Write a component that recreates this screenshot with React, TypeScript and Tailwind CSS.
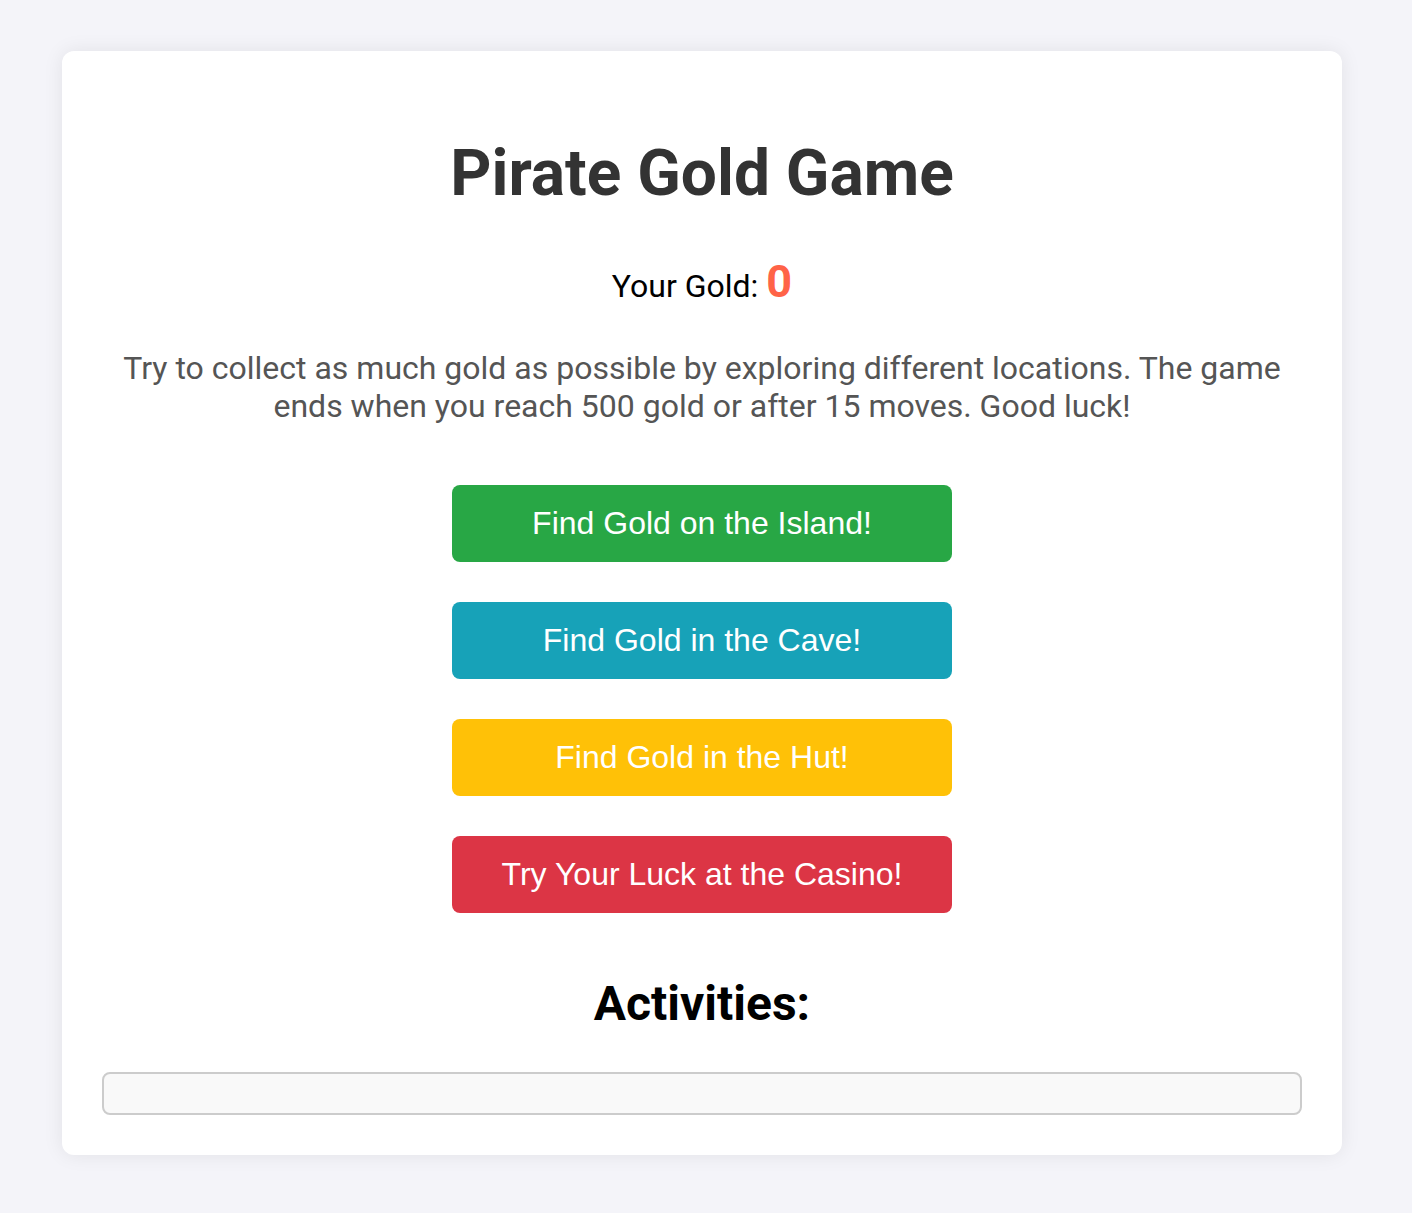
import { useState } from "react";

const actions = [
  { label: "Find Gold on the Island!", color: "bg-[#28a745]" },
  { label: "Find Gold in the Cave!", color: "bg-[#17a2b8]" },
  { label: "Find Gold in the Hut!", color: "bg-[#ffc107]" },
  { label: "Try Your Luck at the Casino!", color: "bg-[#dc3545]" },
];

export default function App() {
  const [gold] = useState(0);

  return (
    <div className="min-h-[1213px] w-full bg-[#f4f4f9] pt-[51px] font-['Roboto',sans-serif] leading-[normal]">
      <div className="ml-[62px] flex w-[1280px] flex-col items-center rounded-xl bg-white p-10 shadow-[0_0_20px_rgba(0,0,0,0.08)]">
        <h1 className="mt-[45px] text-[64px] font-bold leading-[normal] text-[#333]">Pirate Gold Game</h1>

        <p className="mt-[44px] text-[32px] leading-[normal] text-black">
          Your Gold: <span className="text-[45px] font-bold text-[#ff6347]">{gold}</span>
        </p>

        <p className="mt-[41px] text-center text-[32px] leading-[normal] text-[#555]">
          Try to collect as much gold as possible by exploring different locations. The game ends when you reach
          500 gold or after 15 moves. Good luck!
        </p>

        {/* location buttons */}
        <div className="mt-[60px] flex flex-col gap-10">
          {actions.map((a) => (
            <button
              key={a.label}
              className={`flex h-[77px] w-[500px] items-center justify-center rounded-lg ${a.color} font-['Liberation_Sans',Arial,sans-serif] text-[32px] text-white`}
            >
              {a.label}
            </button>
          ))}
        </div>

        <h2 className="mt-[62px] text-[48px] font-bold leading-[normal] text-black">Activities:</h2>

        <div className="mt-10 h-[43px] w-full rounded-lg border-2 border-[#ccc] bg-[#f9f9f9]" />
      </div>
    </div>
  );
}
